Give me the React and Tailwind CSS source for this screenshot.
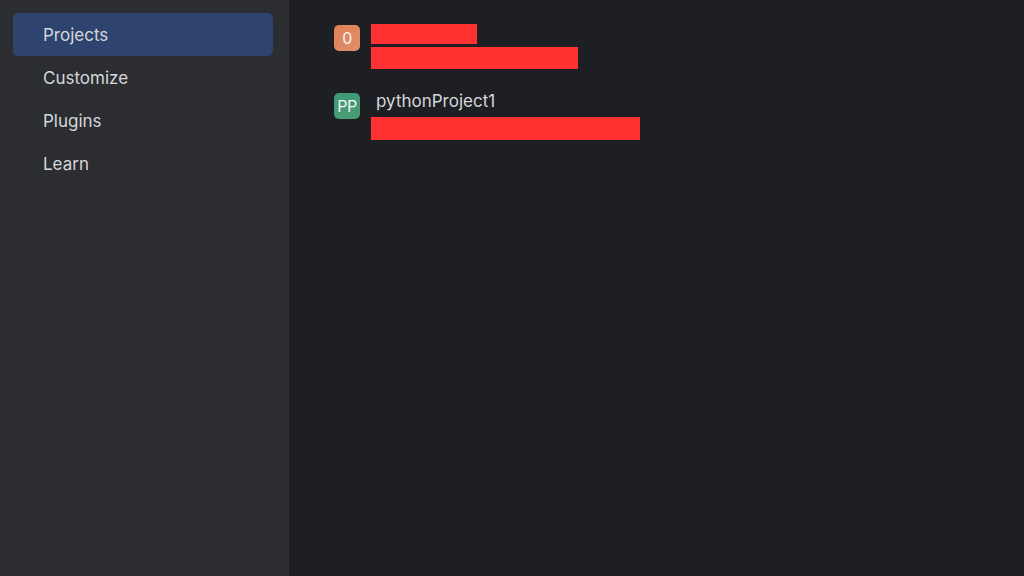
const navItems = ['Projects', 'Customize', 'Plugins', 'Learn'];

const Sidebar = () => (
  <aside className="w-[289px] h-full shrink-0 bg-[#2b2d30] pt-[13px] px-[13px] pr-[16px]">
    {navItems.map((item, i) => (
      <div
        key={item}
        className={`h-[43px] flex items-center pt-[2px] pl-[30px] rounded-[5px] text-[17px] text-[#d5d7db] ${i === 0 ? 'bg-[#2e436e]' : ''}`}
      >
        {item}
      </div>
    ))}
  </aside>
);

const Badge = ({ label, className }) => (
  <div className={`w-[26px] h-[26px] rounded-[5px] flex items-center justify-center text-[#f4f4f4] text-[16px] tracking-[-0.5px] ${className}`}>
    {label}
  </div>
);

const App = () => (
  <div className="w-[1024px] h-[576px] flex overflow-hidden bg-[#1e1f22] font-['Inter',sans-serif]">
    <Sidebar />
    <main className="flex-1 pt-[24px] pl-[45px]">
      <div className="flex gap-[11px]">
        <div className="pt-[1px]">
          <Badge label="0" className="bg-gradient-to-br from-[#e08055] to-[#e08f6c]" />
        </div>
        <div className="flex flex-col gap-[3px]">
          <div className="w-[106px] h-[20px] bg-[#ff3131]" />
          <div className="w-[207px] h-[22px] bg-[#ff3131]" />
        </div>
      </div>
      <div className="flex gap-[11px] mt-[24px]">
        <Badge label="PP" className="bg-gradient-to-b from-[#3d9a78] to-[#4a9c72]" />
        <div className="flex flex-col">
          <div className="h-[24px] -mt-[3px] pl-[5px] flex items-center text-[17px] text-[#d5d7db]">pythonProject1</div>
          <div className="w-[269px] h-[23px] mt-[3px] bg-[#ff3131]" />
        </div>
      </div>
    </main>
  </div>
);

export default App;
